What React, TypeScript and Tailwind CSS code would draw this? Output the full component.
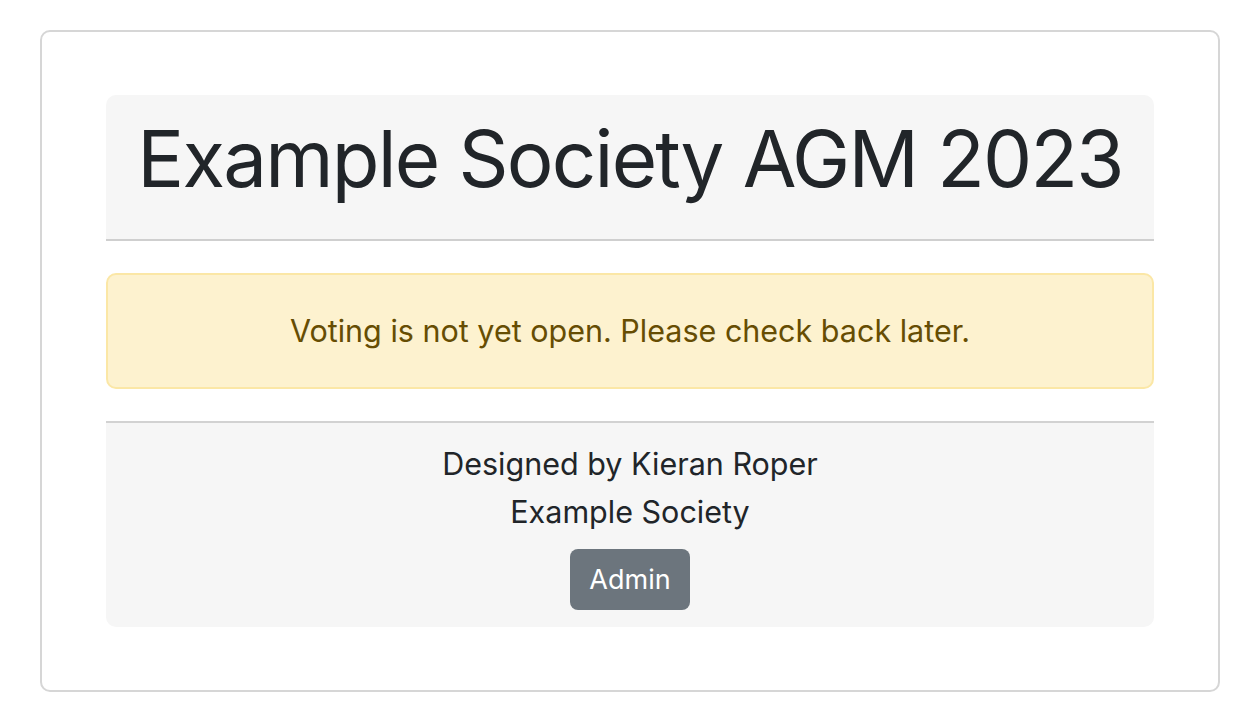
export default function App() {
  return (
    <div className="min-h-screen bg-white pt-[30px] pl-[40px]">
      <div
        className="w-[1180px] rounded-[10px] border-2 border-[#d6d6d6] px-[64px] py-[63px] text-[#212529]"
        style={{ fontFamily: "Inter, 'Noto Sans', sans-serif" }}
      >
        {/* Header */}
        <div className="rounded-t-[10px] border-b-2 border-[#cfcfcf] bg-[#f6f6f6] px-4 pt-4 pb-4 text-center">
          <h1 className="mt-0 mb-4 whitespace-nowrap text-[78px] leading-[96px] font-normal tracking-[-1.8px]">
            Example Society AGM 2023
          </h1>
        </div>

        {/* Alert */}
        <div className="mt-8 rounded-[10px] border-2 border-[#fbe7a6] bg-[#fdf2cf] px-8 py-8 text-center text-[30.5px] leading-[48px] text-[#664d03]">
          Voting is not yet open. Please check back later.
        </div>

        {/* Footer */}
        <div className="mt-[32px] rounded-b-[10px] border-t-2 border-[#d2d2d2] bg-[#f6f6f6] px-8 pt-[17px] pb-[17px] text-center text-[30.5px] leading-[48px]">
          <p>Designed by Kieran Roper</p>
          <p>Example Society</p>
          <button className="mt-[13px] rounded-[8px] bg-[#6c757d] px-[19px] py-[6px] text-[27px] leading-[49px] text-white">
            Admin
          </button>
        </div>
      </div>
    </div>
  );
}
